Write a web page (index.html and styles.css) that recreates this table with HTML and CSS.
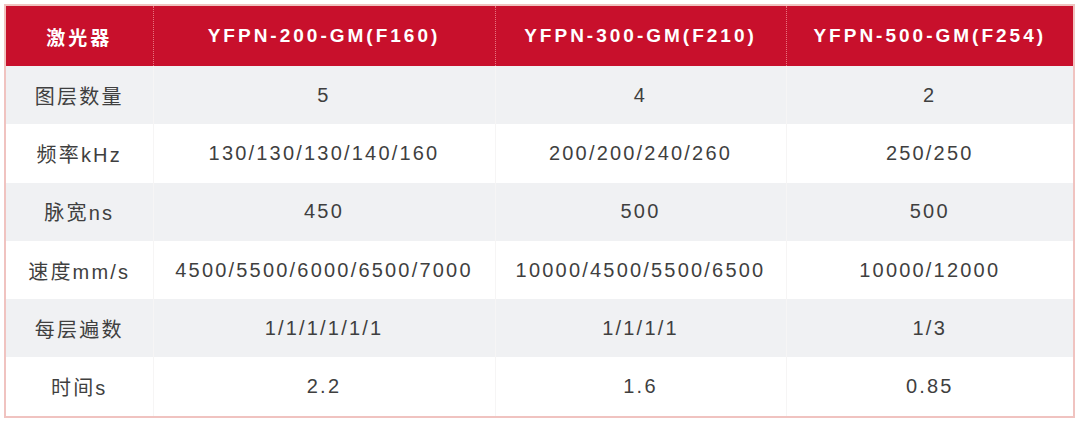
FILE: index.html
```html
<!DOCTYPE html>
<html lang="zh">
<head>
<meta charset="utf-8">
<link rel="stylesheet" href="styles.css">
</head>
<body>
<table class="spec">
  <colgroup>
    <col class="c1"><col class="c2"><col class="c3"><col class="c4">
  </colgroup>
  <thead>
    <tr>
      <th>激光器</th>
      <th>YFPN-200-GM(F160)</th>
      <th>YFPN-300-GM(F210)</th>
      <th>YFPN-500-GM(F254)</th>
    </tr>
  </thead>
  <tbody>
    <tr class="alt"><td>图层数量</td><td>5</td><td>4</td><td>2</td></tr>
    <tr><td>频率kHz</td><td>130/130/130/140/160</td><td>200/200/240/260</td><td>250/250</td></tr>
    <tr class="alt"><td>脉宽ns</td><td>450</td><td>500</td><td>500</td></tr>
    <tr><td>速度mm/s</td><td>4500/5500/6000/6500/7000</td><td>10000/4500/5500/6500</td><td>10000/12000</td></tr>
    <tr class="alt"><td>每层遍数</td><td>1/1/1/1/1/1</td><td>1/1/1/1</td><td>1/3</td></tr>
    <tr><td>时间s</td><td>2.2</td><td>1.6</td><td>0.85</td></tr>
  </tbody>
</table>
</body>
</html>
```
FILE: styles.css
```css
html, body {
  margin: 0;
  padding: 0;
  background: #ffffff;
}
body {
  padding: 4px 6px 0 4px;
  font-family: "Liberation Sans", "Noto Sans CJK SC", sans-serif;
}
.spec {
  width: 1071px;
  border-collapse: collapse;
  table-layout: fixed;
  border: 2px solid #f0c3c0;
}
.c1 { width: 148px; }
.c2 { width: 342px; }
.c3 { width: 291px; }
.c4 { width: 288px; }
.spec th {
  height: 60px;
  padding: 0;
  background: #c8102c;
  color: #ffffff;
  font-size: 19px;
  font-weight: bold;
  letter-spacing: 3px;
  text-align: center;
  vertical-align: middle;
}
.spec th + th {
  border-left: 1px dotted #e8747e;
}
.spec td {
  height: 58.3px;
  padding: 0;
  color: #3f3f3f;
  font-size: 20px;
  letter-spacing: 2.2px;
  text-align: center;
  vertical-align: middle;
  background: #ffffff;
}
.spec td + td {
  border-left: 1px solid #f6f5f5;
}
.spec tr.alt td {
  background: #f0f1f3;
}
```
